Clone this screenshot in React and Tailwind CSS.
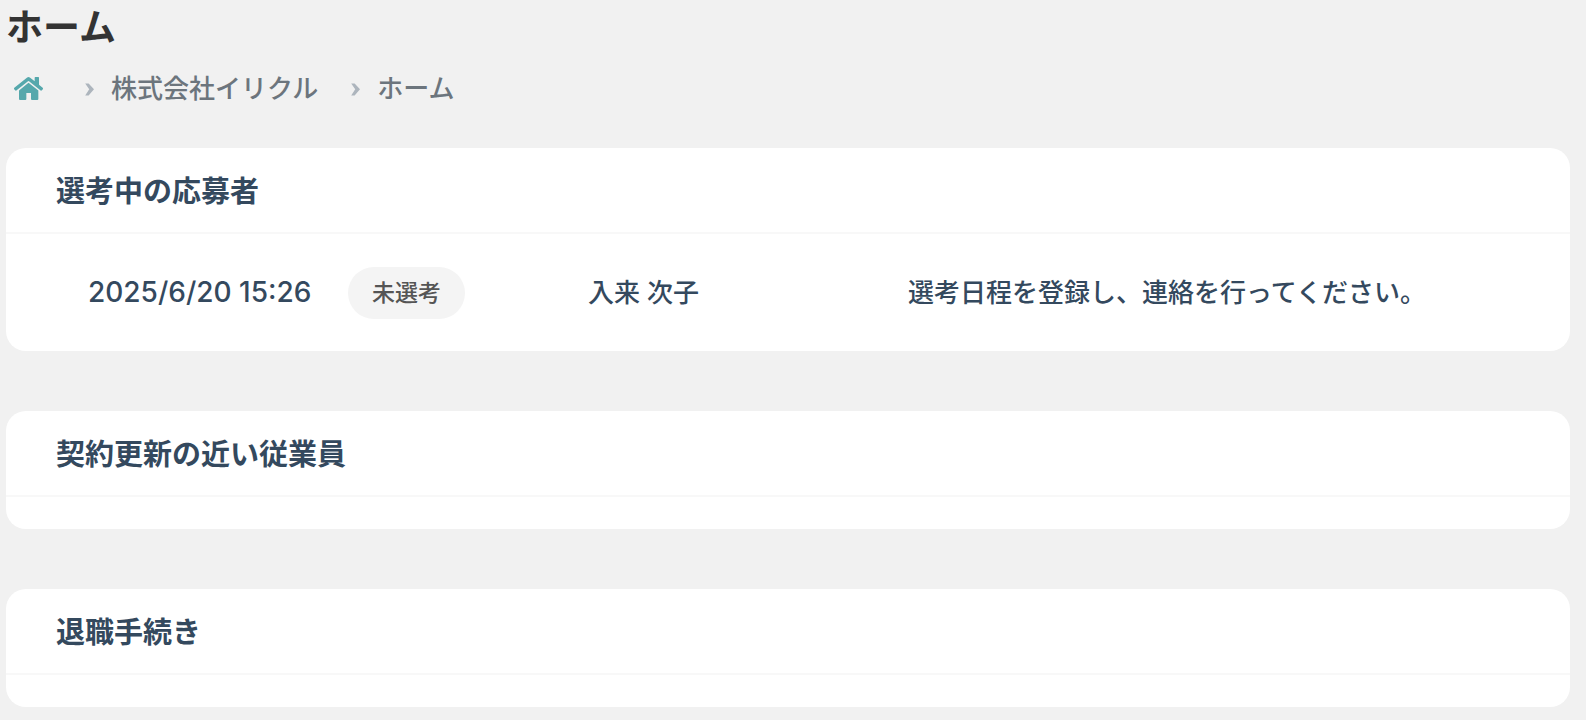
const applicants = [
  {
    date: "2025/6/20 15:26",
    status: "未選考",
    name: "入来 次子",
    message: "選考日程を登録し、連絡を行ってください。",
  },
];

function HomeIcon() {
  return (
    <svg aria-hidden="true" viewBox="0 0 87 69" className="h-[23px] w-[29px]" fill="currentColor">
      <path d="M39.500 1.500Q43.500 -1.500 47.500 1.500L62 13V2Q62 0 64 0H73Q75 0 75 2V23.500L86 32.500Q88 34.500 86.500 36.500L83.500 40Q82 42 80 40.500L45 12.500Q43.500 11.500 42 12.500L7 40.500Q5 42 3.500 40L0.500 36.500Q-1 34.500 1 32.500Z" />
      <path d="M43.500 17L73 40.500V66Q73 69 70 69H54Q51 69 51 66V48H37V66Q37 69 34 69H18Q15 69 15 66V40.500Z" />
    </svg>
  );
}

function Separator() {
  return (
    <svg aria-hidden="true" viewBox="0 0 9 13" className="mt-px h-[13px] w-[9px] text-[#adb5bd]">
      <path d="M0.2 0.4H3.6L9 6.2L3.6 12.4H0.2L4.2 6.2Z" fill="currentColor" />
    </svg>
  );
}

function Breadcrumb() {
  return (
    <nav aria-label="パンくずリスト" className="mt-[17px] ml-2 text-[26px] leading-10 font-medium text-[#6c757d]">
      <ol className="flex items-center">
        <li>
          <a href="#home" aria-label="ホーム" className="block pb-0.5 text-[#56a8ac]">
            <HomeIcon />
          </a>
        </li>
        <li className="ml-[42px] flex items-center gap-[17px]">
          <Separator />
          <a href="#company">株式会社イリクル</a>
        </li>
        <li className="ml-[33px] flex items-center gap-[17px]">
          <Separator />
          <span aria-current="page">ホーム</span>
        </li>
      </ol>
    </nav>
  );
}

function Card({ title, children }) {
  return (
    <section className="rounded-[20px] bg-white text-[#34495e]">
      <h2 className="border-b-2 border-[#f8f8f8] px-[50px] pt-[22px] pb-[18px] text-[29px] leading-[44px] font-bold">
        {title}
      </h2>
      {children ?? <div className="h-8" />}
    </section>
  );
}

export default function App() {
  return (
    <main className="min-h-screen bg-[#f1f1f1] pr-4 pb-3 pl-[6px] font-['Inter','Noto_Sans_CJK_JP',sans-serif]">
      <h1 className="pt-1 text-[37px] leading-[48px] font-bold text-[#333333]">ホーム</h1>
      <Breadcrumb />
      <div className="mt-[39px] flex flex-col gap-[60px]">
        <Card title="選考中の応募者">
          <ul className="px-[82px] py-8">
            {applicants.map((a) => (
              <li
                key={a.date}
                className="grid grid-cols-[260px_240px_320px_1fr] items-center text-[26px] leading-[53px] font-medium whitespace-nowrap"
              >
                <time className="text-[28px]">{a.date}</time>
                <span className="justify-self-start rounded-full bg-[#f4f4f4] px-6 text-[23px] leading-[52px] text-[#555555]">
                  {a.status}
                </span>
                <span>{a.name}</span>
                <span>{a.message}</span>
              </li>
            ))}
          </ul>
        </Card>
        <Card title="契約更新の近い従業員" />
        <Card title="退職手続き" />
      </div>
    </main>
  );
}
